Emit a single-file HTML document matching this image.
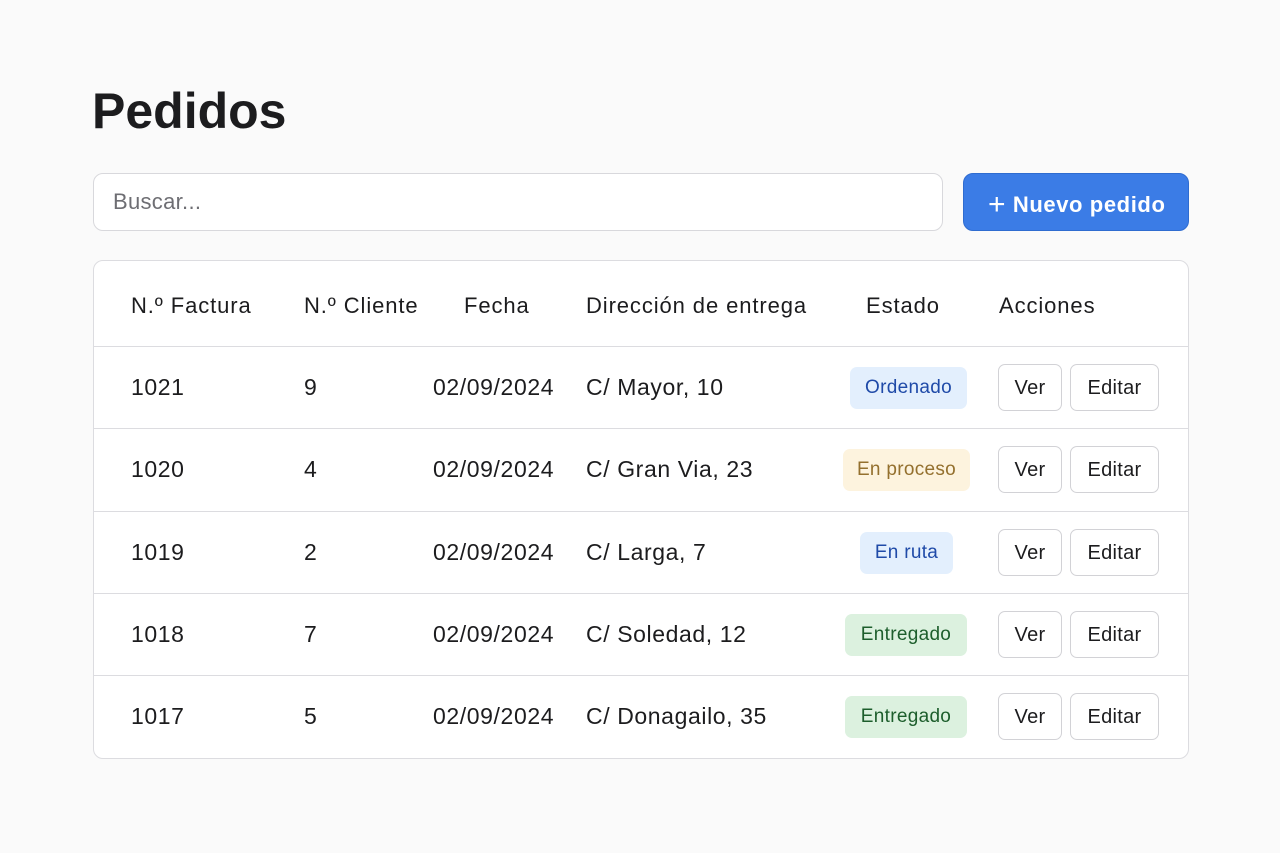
<!DOCTYPE html>
<html><head><meta charset="utf-8"><style>
*{box-sizing:border-box;margin:0;padding:0}
body{width:1280px;height:853px;background:#fafafa;font-family:"Liberation Sans",sans-serif;color:#1c1c1e;position:relative;overflow:hidden}
.a{position:absolute}
h1{position:absolute;left:92px;top:82px;font-size:50px;font-weight:bold}
.search{left:93px;top:173px;width:850px;height:58px;border:1px solid #d8d8dc;border-radius:10px;background:#fff;font-size:22px;color:#6e6e73;padding:15px 0 0 19px;letter-spacing:0.3px}
.btn{left:963px;top:173px;width:226px;height:58px;background:#3b7ce6;border-radius:10px;color:#fff;font-size:22px;font-weight:bold;padding:12px 0 0 24px;border:1px solid #2f6cd0;letter-spacing:0.6px}
.tbl{left:93px;top:260px;width:1096px;height:499px;border:1px solid #dcdce0;border-radius:10px;background:#fff;overflow:hidden}
.hd{font-size:22px;top:32px;letter-spacing:0.9px}
.row{position:absolute;left:0;width:1096px;height:83px;border-top:1px solid #dcdce0;font-size:23px;letter-spacing:0.6px}
.row>.a{top:27px}
.badge{position:absolute;top:20px;height:42px;border-radius:7px;font-size:19px;padding:10px 0 0;text-align:center;letter-spacing:0.3px}
.b{position:absolute;top:17px;height:47px;border:1px solid #d2d2d6;border-radius:7px;font-size:20px;text-align:center;padding-top:12px;background:#fff;letter-spacing:0.3px}
</style></head><body>
<h1>Pedidos</h1>
<div class="a search">Buscar...</div>
<div class="a btn"><span style="font-weight:normal;font-size:30px;position:relative;top:2px">+</span> Nuevo pedido</div>
<div class="a tbl">
<div class="a hd" style="left:37px">N.º Factura</div>
<div class="a hd" style="left:210px">N.º Cliente</div>
<div class="a hd" style="left:370px">Fecha</div>
<div class="a hd" style="left:492px">Dirección de entrega</div>
<div class="a hd" style="left:772px">Estado</div>
<div class="a hd" style="left:905px">Acciones</div>

<div class="row" style="top:85px"><div class="a" style="left:37px">1021</div><div class="a" style="left:210px">9</div><div class="a" style="left:339px">02/09/2024</div><div class="a" style="left:492px">C/ Mayor, 10</div>
<div class="badge" style="left:756px;width:117px;background:#e3effd;color:#1f4aa8">Ordenado</div>
<div class="b" style="left:904px;width:64px">Ver</div><div class="b" style="left:976px;width:89px">Editar</div></div>

<div class="row" style="top:167px"><div class="a" style="left:37px">1020</div><div class="a" style="left:210px">4</div><div class="a" style="left:339px">02/09/2024</div><div class="a" style="left:492px">C/ Gran Via, 23</div>
<div class="badge" style="left:749px;width:127px;background:#fdf3de;color:#94702e">En proceso</div>
<div class="b" style="left:904px;width:64px">Ver</div><div class="b" style="left:976px;width:89px">Editar</div></div>

<div class="row" style="top:250px"><div class="a" style="left:37px">1019</div><div class="a" style="left:210px">2</div><div class="a" style="left:339px">02/09/2024</div><div class="a" style="left:492px">C/ Larga, 7</div>
<div class="badge" style="left:766px;width:93px;background:#e3effd;color:#1f4aa8">En ruta</div>
<div class="b" style="left:904px;width:64px">Ver</div><div class="b" style="left:976px;width:89px">Editar</div></div>

<div class="row" style="top:332px"><div class="a" style="left:37px">1018</div><div class="a" style="left:210px">7</div><div class="a" style="left:339px">02/09/2024</div><div class="a" style="left:492px">C/ Soledad, 12</div>
<div class="badge" style="left:751px;width:122px;background:#dcf1df;color:#1d5e2c">Entregado</div>
<div class="b" style="left:904px;width:64px">Ver</div><div class="b" style="left:976px;width:89px">Editar</div></div>

<div class="row" style="top:414px"><div class="a" style="left:37px">1017</div><div class="a" style="left:210px">5</div><div class="a" style="left:339px">02/09/2024</div><div class="a" style="left:492px">C/ Donagailo, 35</div>
<div class="badge" style="left:751px;width:122px;background:#dcf1df;color:#1d5e2c">Entregado</div>
<div class="b" style="left:904px;width:64px">Ver</div><div class="b" style="left:976px;width:89px">Editar</div></div>
</div>
</body></html>
